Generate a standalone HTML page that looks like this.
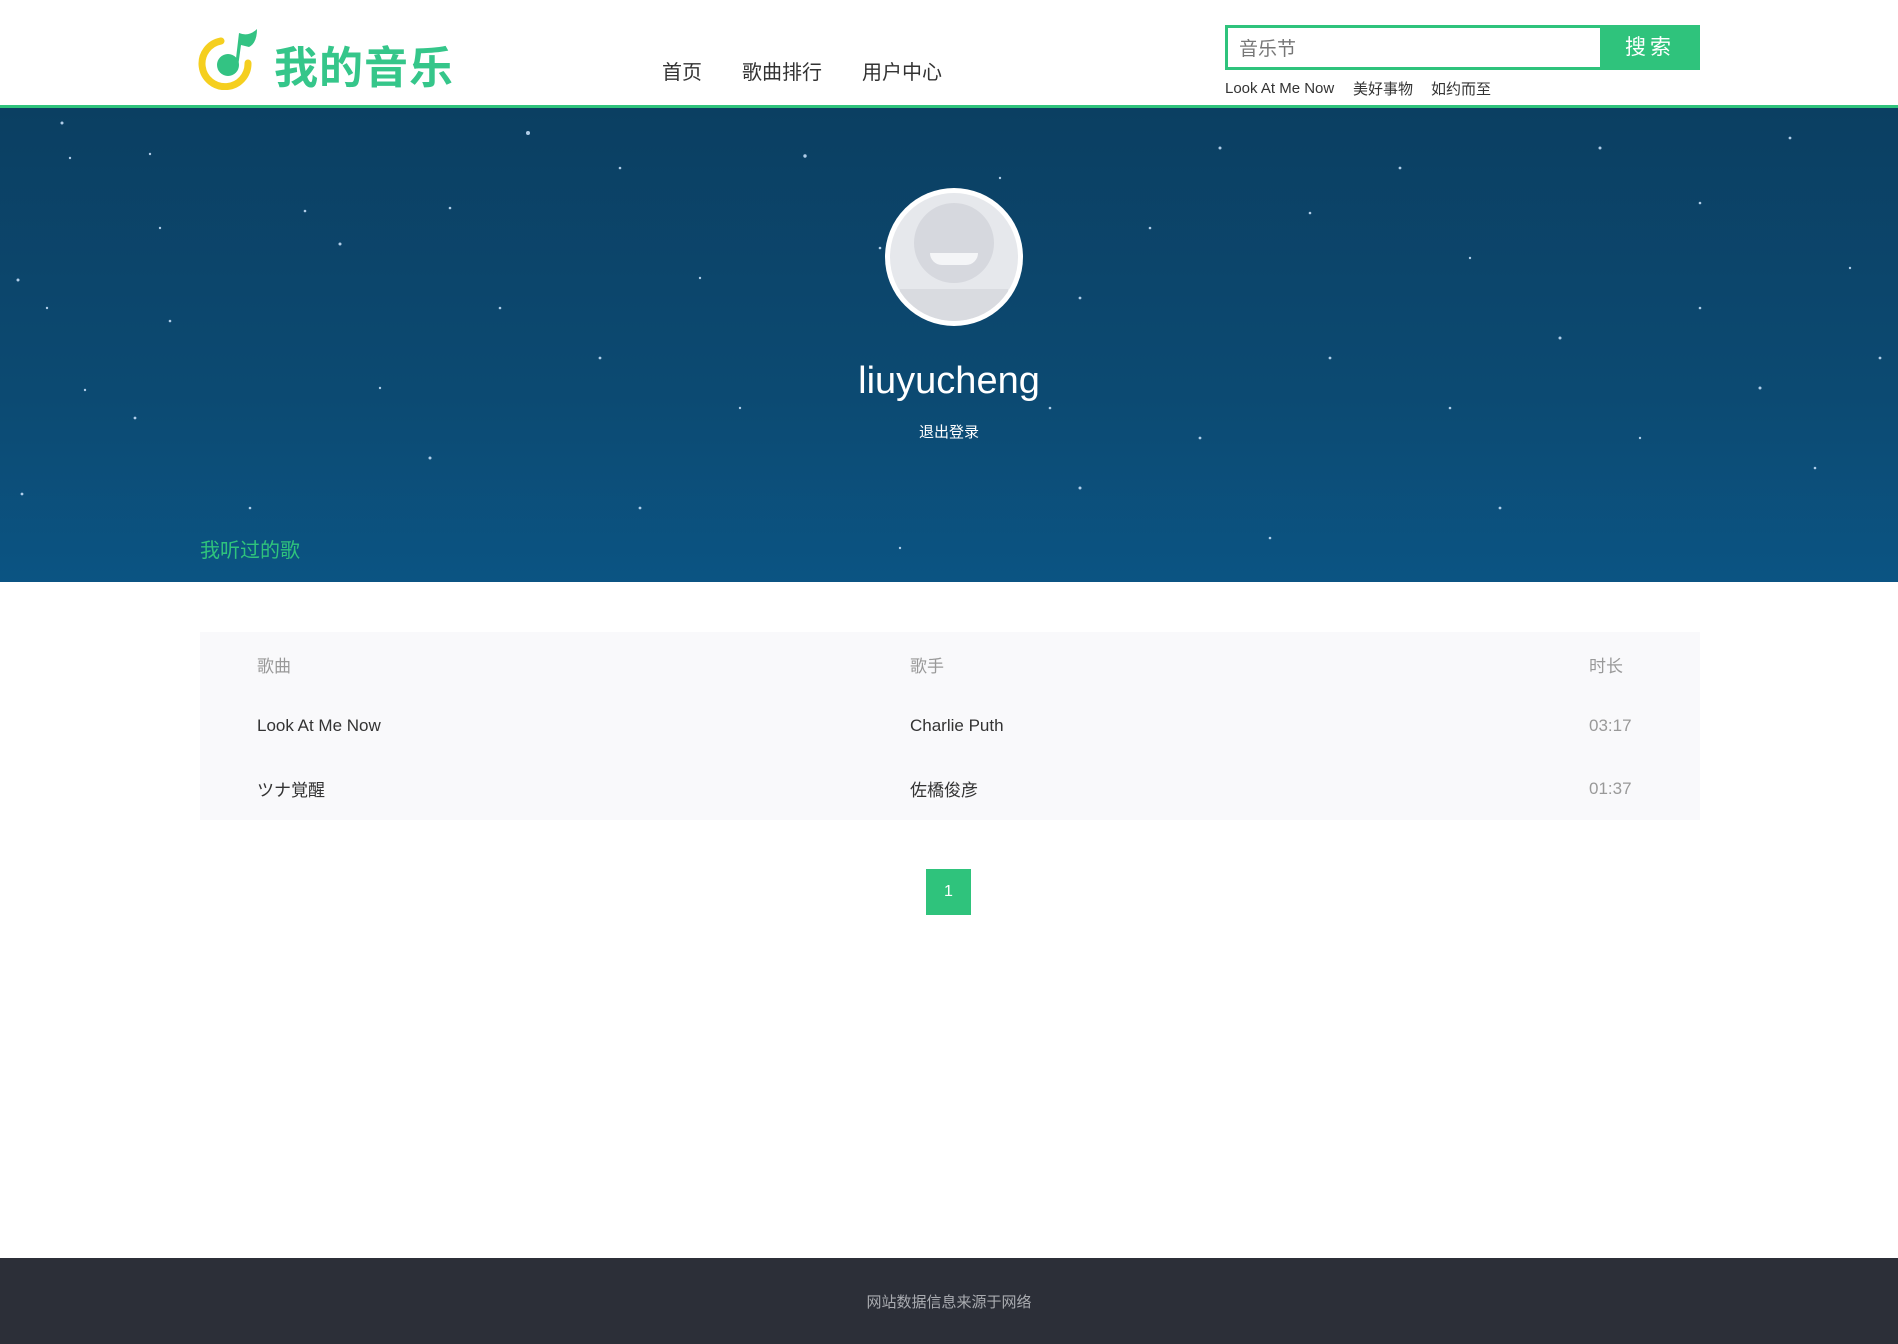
<!DOCTYPE html>
<html><head><meta charset="utf-8"><style>
*{margin:0;padding:0;box-sizing:border-box}
body{width:1898px;height:1344px;position:relative;background:#fff;font-family:"Liberation Sans","Noto Sans CJK SC",sans-serif;overflow:hidden}
.a{position:absolute;white-space:nowrap}
.nav{font-size:20px;color:#333;top:56px}
.hot{font-size:15px;color:#333;top:80px}
.banner{position:absolute;left:0;top:108px;width:1898px;height:474px;background:linear-gradient(180deg,#0b3f62 0%,#0c4a72 60%,#0b5483 100%)}
.th{font-size:17px;color:#999}
.td{font-size:17px;color:#333}
</style></head><body>
<svg class="a" style="left:195px;top:25px" width="70" height="65" viewBox="0 0 70 65">
<path d="M26 16 A23 23 0 1 0 53 38" fill="none" stroke="#f5cf1f" stroke-width="7" stroke-linecap="round"/>
<circle cx="33" cy="40" r="11" fill="#33c383"/>
<path d="M40 42 L44 8 Q54 12 62 4 Q62 18 54 22 L46 20 L43 42Z" fill="#33c383"/>
</svg>
<div class="a" style="left:274px;top:32px;font-size:44px;font-weight:bold;color:#35c68a;letter-spacing:1px">我的音乐</div>
<div class="a nav" style="left:662px">首页</div>
<div class="a nav" style="left:742px">歌曲排行</div>
<div class="a nav" style="left:862px">用户中心</div>
<div class="a" style="left:1225px;top:25px;width:376px;height:45px;border:3px solid #2fc37c;border-right:none;background:#fff"></div>
<div class="a" style="left:1239px;top:34px;font-size:19px;color:#777">音乐节</div>
<div class="a" style="left:1600px;top:25px;width:100px;height:45px;background:#2fc37c;color:#fff;font-size:21px;text-align:center;line-height:45px;letter-spacing:4px">搜索</div>
<div class="a hot" style="left:1225px">Look At Me Now</div>
<div class="a hot" style="left:1353px;top:78px">美好事物</div>
<div class="a hot" style="left:1431px;top:78px">如约而至</div>
<div class="a" style="left:0;top:105px;width:1898px;height:3px;background:#2fc37c"></div>
<div class="banner">
<svg width="1898" height="474" style="position:absolute;left:0;top:0">
<g fill="#cfe6ff" opacity="0.85">
<circle cx="62" cy="15" r="1.5"/><circle cx="70" cy="50" r="1.2"/><circle cx="150" cy="46" r="1.2"/><circle cx="340" cy="136" r="1.5"/><circle cx="305" cy="103" r="1.3"/><circle cx="47" cy="200" r="1.2"/><circle cx="18" cy="172" r="1.5"/><circle cx="135" cy="310" r="1.4"/><circle cx="170" cy="213" r="1.3"/><circle cx="85" cy="282" r="1.2"/><circle cx="22" cy="386" r="1.4"/><circle cx="528" cy="25" r="2"/><circle cx="620" cy="60" r="1.3"/><circle cx="805" cy="48" r="1.7"/><circle cx="880" cy="140" r="1.3"/><circle cx="1000" cy="70" r="1.2"/><circle cx="1080" cy="190" r="1.4"/><circle cx="1220" cy="40" r="1.5"/><circle cx="1310" cy="105" r="1.3"/><circle cx="1400" cy="60" r="1.4"/><circle cx="1470" cy="150" r="1.2"/><circle cx="1600" cy="40" r="1.5"/><circle cx="1700" cy="95" r="1.3"/><circle cx="1790" cy="30" r="1.4"/><circle cx="1850" cy="160" r="1.2"/><circle cx="1560" cy="230" r="1.5"/><circle cx="1450" cy="300" r="1.3"/><circle cx="1330" cy="250" r="1.4"/><circle cx="1640" cy="330" r="1.2"/><circle cx="1760" cy="280" r="1.5"/><circle cx="1815" cy="360" r="1.3"/><circle cx="1200" cy="330" r="1.4"/><circle cx="1080" cy="380" r="1.5"/><circle cx="1050" cy="300" r="1.3"/><circle cx="740" cy="300" r="1.2"/><circle cx="600" cy="250" r="1.4"/><circle cx="500" cy="200" r="1.3"/><circle cx="430" cy="350" r="1.5"/><circle cx="380" cy="280" r="1.2"/><circle cx="250" cy="400" r="1.3"/><circle cx="640" cy="400" r="1.4"/><circle cx="700" cy="170" r="1.2"/><circle cx="1150" cy="120" r="1.3"/><circle cx="1500" cy="400" r="1.4"/><circle cx="1700" cy="200" r="1.3"/><circle cx="900" cy="440" r="1.2"/><circle cx="1270" cy="430" r="1.3"/><circle cx="1880" cy="250" r="1.4"/><circle cx="160" cy="120" r="1.2"/><circle cx="450" cy="100" r="1.3"/>
</g></svg>
</div>
<div class="a" style="left:885px;top:188px;width:138px;height:138px;border-radius:50%;background:#fff;padding:5px">
<div style="width:128px;height:128px;border-radius:50%;background:#e6e8ec;overflow:hidden;position:relative">
<div style="position:absolute;left:24px;top:10px;width:80px;height:80px;border-radius:50%;background:#d6d8de"></div>
<div style="position:absolute;left:40px;top:60px;width:48px;height:12px;border-radius:0 0 24px 24px;background:#f4f5f7"></div>
<div style="position:absolute;left:10px;top:96px;width:108px;height:40px;background:#d9dbe0"></div>
</div></div>
<div class="a" style="left:0;width:1898px;text-align:center;top:360px;font-size:38px;color:#fff">liuyucheng</div>
<div class="a" style="left:0;width:1898px;text-align:center;top:421px;font-size:15px;color:#fff">退出登录</div>
<div class="a" style="left:200px;top:534px;font-size:20px;color:#2fc37c">我听过的歌</div>
<div class="a" style="left:200px;top:632px;width:1500px;height:188px;background:#f9f9fb"></div>
<div class="a th" style="left:257px;top:652px">歌曲</div>
<div class="a th" style="left:910px;top:652px">歌手</div>
<div class="a th" style="left:1589px;top:652px">时长</div>
<div class="a td" style="left:257px;top:716px">Look At Me Now</div>
<div class="a td" style="left:910px;top:716px">Charlie Puth</div>
<div class="a th" style="left:1589px;top:716px">03:17</div>
<div class="a td" style="left:257px;top:776px">ツナ覚醒</div>
<div class="a td" style="left:910px;top:776px">佐橋俊彦</div>
<div class="a th" style="left:1589px;top:779px">01:37</div>
<div class="a" style="left:926px;top:869px;width:45px;height:46px;background:#2fc37c;color:#fff;font-size:16px;text-align:center;line-height:46px">1</div>
<div class="a" style="left:0;top:1258px;width:1898px;height:86px;background:#2c2f38"></div>
<div class="a" style="left:0;width:1898px;text-align:center;top:1291px;font-size:15px;color:#a9abb0">网站数据信息来源于网络</div>
</body></html>
